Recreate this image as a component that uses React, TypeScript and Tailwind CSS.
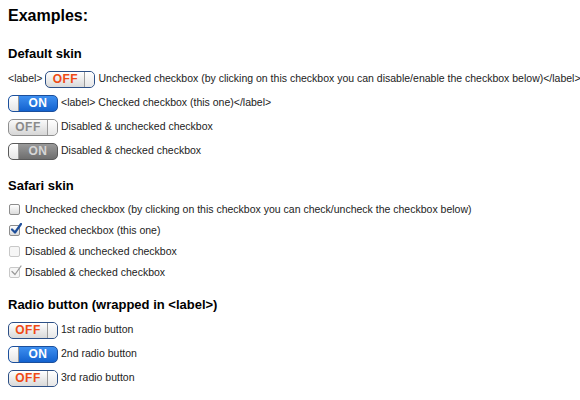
import React from "react";

type SwitchProps = { on?: boolean; disabled?: boolean };

function Switch({ on = false, disabled = false }: SwitchProps) {
  const frame = disabled
    ? on
      ? "border-[#5a5a5a] bg-gradient-to-b from-[#9a9a9a] to-[#6e6e6e]"
      : "border-[#8f8f8f] bg-gradient-to-b from-[#fafafa] to-[#d6d6d6]"
    : on
      ? "border-[#1b4f9c] bg-gradient-to-b from-[#3d8ff0] to-[#1262cf]"
      : "border-[#2c4f86] bg-gradient-to-b from-[#ffffff] to-[#d9d9d9]";
  const label = disabled
    ? on
      ? "text-[#d6d6d6]"
      : "text-[#8a8a8a]"
    : on
      ? "text-white"
      : "text-[#ef4a16]";
  const knob = (
    <div
      className={
        "h-full w-[10px] bg-gradient-to-b from-white to-[#e6e6e6] " +
        (on ? "rounded-l-[4px] border-r border-[#9a9a9a]" : "rounded-r-[4px] border-l border-[#9a9a9a]")
      }
    />
  );
  return (
    <div
      className={
        "flex h-[17px] w-[50px] shrink-0 overflow-hidden rounded-[5px] border " + frame
      }
    >
      {on && knob}
      <div
        className={
          "flex flex-1 items-center justify-center text-[12px] font-bold leading-none tracking-[0.5px] " +
          label
        }
      >
        {on ? "ON" : "OFF"}
      </div>
      {!on && knob}
    </div>
  );
}

function Box({ checked = false, disabled = false }: { checked?: boolean; disabled?: boolean }) {
  return (
    <div
      className={
        "relative h-[11px] w-[11px] shrink-0 rounded-[2px] border " +
        (disabled
          ? "border-[#c8c8c8] bg-[#f6f6f6]"
          : "border-[#8d8d8d] bg-gradient-to-b from-[#ffffff] to-[#dcdcdc]")
      }
    >
      {checked && (
        <svg
          viewBox="0 0 12 12"
          className="absolute left-[0px] top-[-3px] h-[12px] w-[12px]"
        >
          <path
            d="M2 6.5 L5 9.5 L11 1"
            fill="none"
            stroke={disabled ? "#9a9a9a" : "#1f4f9a"}
            strokeWidth={disabled ? 1.3 : 2.2}
            strokeLinecap="round"
            strokeLinejoin="round"
          />
        </svg>
      )}
    </div>
  );
}

export default function App() {
  return (
    <div
      className="h-[400px] w-[580px] overflow-hidden whitespace-nowrap bg-white pl-[8px] text-[10.5px] text-[#222]"
      style={{ fontFamily: '"Liberation Sans", Arial, sans-serif' }}
    >
      <div className="flex h-[32px] items-center text-[16px] font-bold text-black">Examples:</div>

      <div className="mt-[9px] flex h-[26px] items-center text-[13px] font-bold text-black">Default skin</div>
      <div className="flex h-[24px] items-center gap-[3px]">
        <span>&lt;label&gt;</span>
        <Switch />
        <span>Unchecked checkbox (by clicking on this checkbox you can disable/enable the checkbox below)&lt;/label&gt;</span>
      </div>
      <div className="flex h-[24px] items-center gap-[3px]">
        <Switch on />
        <span>&lt;label&gt; Checked checkbox (this one)&lt;/label&gt;</span>
      </div>
      <div className="flex h-[24px] items-center gap-[3px]">
        <Switch disabled />
        <span>Disabled &amp; unchecked checkbox</span>
      </div>
      <div className="flex h-[24px] items-center gap-[3px]">
        <Switch on disabled />
        <span>Disabled &amp; checked checkbox</span>
      </div>

      <div className="mt-[10px] flex h-[26px] items-center text-[13px] font-bold text-black">Safari skin</div>
      <div className="flex h-[21px] items-center gap-[5px] pl-[1px]">
        <Box />
        <span>Unchecked checkbox (by clicking on this checkbox you can check/uncheck the checkbox below)</span>
      </div>
      <div className="flex h-[21px] items-center gap-[5px] pl-[1px]">
        <Box checked />
        <span>Checked checkbox (this one)</span>
      </div>
      <div className="flex h-[21px] items-center gap-[5px] pl-[1px]">
        <Box disabled />
        <span>Disabled &amp; unchecked checkbox</span>
      </div>
      <div className="flex h-[21px] items-center gap-[5px] pl-[1px]">
        <Box checked disabled />
        <span>Disabled &amp; checked checkbox</span>
      </div>

      <div className="mt-[9px] flex h-[26px] items-center text-[13px] font-bold text-black">
        Radio button (wrapped in &lt;label&gt;)
      </div>
      <div className="flex h-[24px] items-center gap-[3px]">
        <Switch />
        <span>1st radio button</span>
      </div>
      <div className="flex h-[24px] items-center gap-[3px]">
        <Switch on />
        <span>2nd radio button</span>
      </div>
      <div className="flex h-[24px] items-center gap-[3px]">
        <Switch />
        <span>3rd radio button</span>
      </div>
    </div>
  );
}
